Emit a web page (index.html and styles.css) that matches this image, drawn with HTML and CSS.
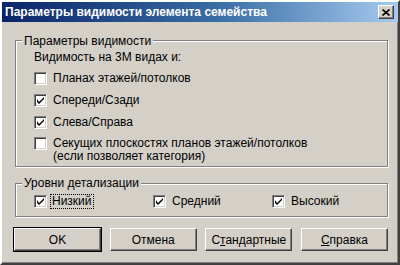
FILE: index.html
```html
<!DOCTYPE html>
<html lang="ru">
<head>
  <meta charset="UTF-8" />
  <title>Параметры видимости элемента семейства</title>
  <link rel="stylesheet" href="styles.css">
</head>
<body>
  <div class="window">
    <div class="titlebar">
      <span class="title">Параметры видимости элемента семейства</span>
      <div class="close-btn">
        <svg width="8" height="7" viewBox="0 0 8 7"><path d="M0.5 0.5 L7.5 6.5 M7.5 0.5 L0.5 6.5" stroke="#000" stroke-width="1.6"/></svg>
      </div>
    </div>

    <div class="content">
      <div class="group group-vis">
        <div class="legend">Параметры видимости</div>
        <div class="caption">Видимость на 3М видах и:</div>
        <label class="row">
          <span class="check"></span>
          <span>Планах этажей/потолков</span>
        </label>
        <label class="row">
          <span class="check checked">
            <svg width="7" height="7" viewBox="0 0 7 7"><path d="M0 2 L0 5 L2 7 L7 2 L7 0 L2 5 Z" fill="#000"/></svg>
          </span>
          <span>Спереди/Сзади</span>
        </label>
        <label class="row">
          <span class="check checked">
            <svg width="7" height="7" viewBox="0 0 7 7"><path d="M0 2 L0 5 L2 7 L7 2 L7 0 L2 5 Z" fill="#000"/></svg>
          </span>
          <span>Слева/Справа</span>
        </label>
        <label class="row row-multi">
          <span class="check"></span>
          <span>Секущих плоскостях планов этажей/потолков<br>(если позволяет категория)</span>
        </label>
      </div>

      <div class="group group-detail">
        <div class="legend">Уровни детализации</div>
        <div class="detail-row">
          <label class="row">
            <span class="check checked">
              <svg width="7" height="7" viewBox="0 0 7 7"><path d="M0 2 L0 5 L2 7 L7 2 L7 0 L2 5 Z" fill="#000"/></svg>
            </span>
            <span class="focus">Низкий</span>
          </label>
          <label class="row">
            <span class="check checked">
              <svg width="7" height="7" viewBox="0 0 7 7"><path d="M0 2 L0 5 L2 7 L7 2 L7 0 L2 5 Z" fill="#000"/></svg>
            </span>
            <span>Средний</span>
          </label>
          <label class="row">
            <span class="check checked">
              <svg width="7" height="7" viewBox="0 0 7 7"><path d="M0 2 L0 5 L2 7 L7 2 L7 0 L2 5 Z" fill="#000"/></svg>
            </span>
            <span>Высокий</span>
          </label>
        </div>
      </div>

      <div class="buttons">
        <div class="btn btn-default"><span>OK</span></div>
        <div class="btn"><span>Отмена</span></div>
        <div class="btn"><span>С<u>т</u>андартные</span></div>
        <div class="btn"><span><u>С</u>правка</span></div>
      </div>
    </div>
  </div>
</body>
</html>
```

FILE: styles.css
```css
body {
  margin: 0;
  background: #d4d0c8;
  font-family: 'Liberation Sans', Arial, sans-serif;
  font-size: 12px;
  color: #000;
}

.window {
  width: 400px;
  height: 265px;
  box-sizing: border-box;
  background: #d4d0c8;
  border-style: solid;
  border-width: 2px;
  border-color: #fff #404040 #404040 #fff;
  box-shadow: inset -1px -1px 0 #808080;
  display: flex;
  flex-direction: column;
}

.titlebar {
  height: 20px;
  display: flex;
  align-items: center;
  justify-content: space-between;
  padding: 0 4px 0 3px;
  background: linear-gradient(to right, #0a246a 0%, #3a6ea5 55%, #a6caf0 100%);
}

.title {
  color: #fff;
  font-weight: bold;
  font-size: 12px;
}

.close-btn {
  width: 16px;
  height: 14px;
  box-sizing: border-box;
  background: #d4d0c8;
  border-style: solid;
  border-width: 1px;
  border-color: #fff #404040 #404040 #fff;
  box-shadow: inset -1px -1px 0 #808080;
  display: flex;
  align-items: center;
  justify-content: center;
}

.content {
  flex: 1;
  padding: 0 10px 0 13px;
}

.group {
  border: 1px solid #808080;
  box-shadow: inset 1px 1px 0 #fff, 1px 1px 0 #fff;
  padding: 0 0 2px 18px;
}

.group-vis {
  margin-top: 18px;
  height: 127px;
  box-sizing: border-box;
}

.group-detail {
  margin-top: 16px;
  padding-bottom: 4px;
}

.legend {
  width: fit-content;
  background: #d4d0c8;
  line-height: 14px;
  height: 14px;
  margin: -7px 0 0 -12px;
  padding: 0 2px;
}

.group-detail .legend {
  margin-top: -8px;
}

.caption {
  line-height: 14px;
  margin-top: 2px;
  margin-bottom: 3px;
}

.row {
  display: flex;
  align-items: center;
  gap: 6px;
  height: 22px;
}

.row-multi {
  align-items: flex-start;
  height: auto;
  padding-top: 4px;
  line-height: 13px;
}

.check {
  width: 13px;
  height: 13px;
  flex: none;
  box-sizing: border-box;
  background: #fff;
  border-style: solid;
  border-width: 1px;
  border-color: #808080 #fff #fff #808080;
  box-shadow: inset 1px 1px 0 #404040, inset -1px -1px 0 #d4d0c8;
  display: flex;
  align-items: center;
  justify-content: center;
}

.detail-row {
  display: grid;
  grid-template-columns: 119px 119px auto;
}

.detail-row .row {
  gap: 3px;
}

.detail-row .row span:last-child:not(.focus) {
  margin-left: 3px;
}

.focus {
  border: 1px dotted #000;
  padding: 0 1px;
  line-height: 13px;
}

.buttons {
  display: flex;
  justify-content: space-between;
  margin: 11px 0 0 -1px;
}

.btn {
  width: 87px;
  height: 23px;
  box-sizing: border-box;
  border-style: solid;
  border-width: 1px;
  border-color: #fff #404040 #404040 #fff;
  box-shadow: inset -1px -1px 0 #808080;
  display: flex;
  align-items: center;
  justify-content: center;
}

.btn-default {
  outline: 1px solid #000;
  outline-offset: 0;
}
```
